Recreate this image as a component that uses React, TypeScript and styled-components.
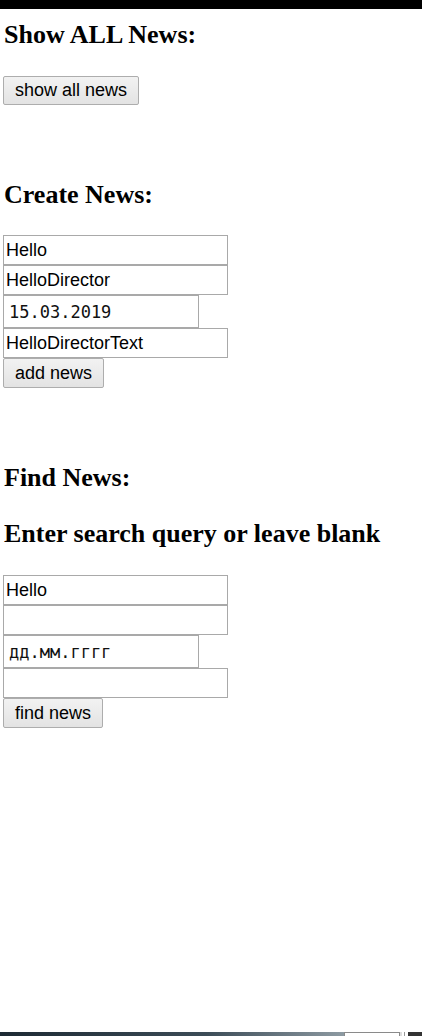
import React from "react";
import styled, { createGlobalStyle } from "styled-components";

const Global = createGlobalStyle`
  html, body { margin: 0; padding: 0; background: #ffffff; }
  body { font-family: "Liberation Serif", "Times New Roman", serif; color: #000; }
`;

const Page = styled.div`
  display: flex;
  flex-direction: column;
  min-height: 1036px;
`;

const TopBar = styled.div`
  height: 9px;
  background: #000;
`;

const Main = styled.main`
  flex: 1;
  display: flex;
  flex-direction: column;
  align-items: flex-start;
  padding: 0 0 0 3px;
`;

const Heading = styled.h2<{ $top: number }>`
  margin: ${(p) => p.$top}px 0 0 0;
  font-family: "Liberation Serif", "Times New Roman", serif;
  font-size: 26px;
  line-height: 28px;
  font-weight: bold;
  padding-left: 1px;
`;

const Form = styled.div<{ $top: number }>`
  display: flex;
  flex-direction: column;
  align-items: flex-start;
  margin-top: ${(p) => p.$top}px;
`;

const TextInput = styled.input`
  box-sizing: border-box;
  width: 225px;
  height: 30px;
  margin: 0;
  padding: 0 2px;
  border: 1px solid #a9a9a9;
  font-family: "Liberation Sans", Arial, sans-serif;
  font-size: 18px;
  color: #000;
  background: #fff;
  outline: none;
`;

const DateInput = styled.input`
  box-sizing: border-box;
  width: 196px;
  height: 33px;
  margin: 0;
  padding: 0 5px;
  border: 1px solid #a9a9a9;
  font-family: "DejaVu Sans Mono", "Liberation Mono", monospace;
  font-size: 17px;
  color: #111;
  background: #fff;
  outline: none;
`;

const Button = styled.button<{ $top?: number }>`
  box-sizing: border-box;
  height: 30px;
  margin: ${(p) => p.$top ?? 0}px 0 0 0;
  padding: 0 11px;
  border: 1px solid #adadad;
  border-radius: 2px;
  background: linear-gradient(#f2f2f2, #e3e3e3);
  font-family: "Liberation Sans", Arial, sans-serif;
  font-size: 18px;
  color: #000;
  cursor: default;
`;

const Taskbar = styled.div`
  display: flex;
  height: 4px;
`;

const TaskbarMain = styled.div`
  flex: 1;
  background: linear-gradient(90deg, #1d2a34, #3c4c57 60%, #8d9aa2);
`;

const TaskbarBox = styled.div`
  width: 56px;
  box-sizing: border-box;
  border: 1px solid #8a8a8a;
  border-bottom: none;
  background: #fff;
`;

const TaskbarTail = styled.div`
  width: 22px;
  background: linear-gradient(90deg, #ddd 0 2px, #fff 2px 4px, #999 4px 5px, #fff 5px 8px, #333 8px);
`;

export default function App() {
  return (
    <Page>
      <Global />
      <TopBar />
      <Main>
        <Heading $top={12}>Show ALL News:</Heading>
        <Button $top={27} style={{ height: 29 }}>show all news</Button>

        <Heading $top={76}>Create News:</Heading>
        <Form $top={26}>
          <TextInput defaultValue="Hello" />
          <TextInput defaultValue="HelloDirector" />
          <DateInput defaultValue="15.03.2019" />
          <TextInput defaultValue="HelloDirectorText" />
          <Button>add news</Button>
        </Form>

        <Heading $top={76}>Find News:</Heading>
        <Heading $top={28}>Enter search query or leave blank</Heading>
        <Form $top={27}>
          <TextInput defaultValue="Hello" />
          <TextInput defaultValue="" />
          <DateInput defaultValue="дд.мм.гггг" />
          <TextInput defaultValue="" />
          <Button>find news</Button>
        </Form>
      </Main>
      <Taskbar>
        <TaskbarMain />
        <TaskbarBox />
        <TaskbarTail />
      </Taskbar>
    </Page>
  );
}
